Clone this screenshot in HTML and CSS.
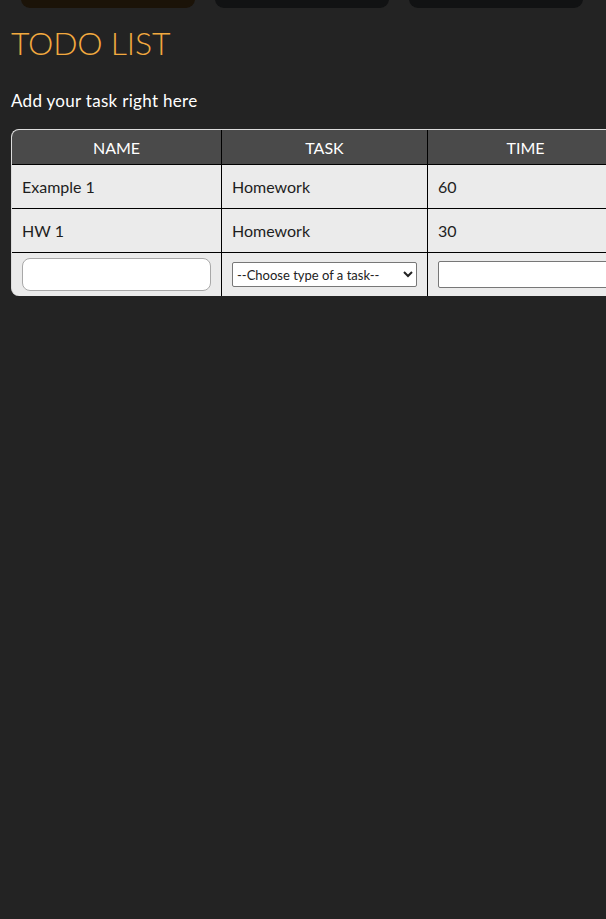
FILE: index.html
```html
<!DOCTYPE html>
<html>
<head>
<meta charset="utf-8">
<link rel="stylesheet" href="styles.css">
</head>
<body>
<nav class="nav">
  <button class="nav-btn nav-btn-active"></button>
  <button class="nav-btn"></button>
  <button class="nav-btn"></button>
</nav>
<h1 class="title">TODO LIST</h1>
<p class="lead">Add your task right here</p>
<table class="todo">
  <thead>
    <tr>
      <th class="col-name">NAME</th>
      <th class="col-task">TASK</th>
      <th class="col-time">TIME</th>
    </tr>
  </thead>
  <tbody>
    <tr><td>Example 1</td><td>Homework</td><td>60</td></tr>
    <tr><td>HW 1</td><td>Homework</td><td>30</td></tr>
    <tr class="form-row">
      <td><input class="name-input" type="text"></td>
      <td><select class="task-select"><option>--Choose type of a task--</option></select></td>
      <td><input class="time-input" type="text"></td>
    </tr>
  </tbody>
</table>
</body>
</html>
```
FILE: styles.css
```css
html { overflow: hidden; }
body {
  margin: 0;
  background: #232323;
  font-family: "Lato", "Noto Sans", sans-serif;
  color: #fff;
  width: 700px;
}
.nav {
  display: flex;
  gap: 20px;
  padding-left: 21px;
  margin-top: -32px;
}
.nav-btn {
  width: 174px;
  height: 40px;
  border: none;
  border-radius: 9px;
  background: #111213;
  padding: 0;
}
.nav-btn-active { background: #1b1308; }
.title {
  margin: 15px 0 0 11px;
  font-size: 32px;
  font-weight: 300;
  color: #f2a93f;
  line-height: 40px;
  letter-spacing: -0.2px;
}
.lead {
  margin: 26px 0 0 11px;
  font-size: 17px;
  line-height: 24px;
  letter-spacing: 0.3px;
}
.todo {
  margin: 16px 0 0 11px;
  border-collapse: separate;
  border-spacing: 0;
  border-top: 1px solid #dcdcdc;
  border-left: 1px solid #dcdcdc;
  border-radius: 8px 0 0 8px;
  background: #ebebeb;
  overflow: hidden;
  font-size: 16px;
}
.todo th {
  background: #4a4a4a;
  color: #fff;
  font-weight: 400;
  height: 35px;
  box-sizing: border-box;
  padding: 0;
  border-right: 1px solid #000;
  border-bottom: 1px solid #000;
  text-align: center;
}
.col-name { width: 210px; }
.col-task { width: 206px; }
.col-time { width: 196px; }
.todo td {
  color: #1e1e1e;
  height: 44px;
  padding: 0 10px;
  border-right: 1px solid #000;
  border-bottom: 1px solid #000;
  box-sizing: border-box;
}
.todo tbody tr:last-child td { border-bottom: none; height: 43px; }
.name-input {
  display: block;
  width: 189px;
  height: 33px;
  box-sizing: border-box;
  border: 1px solid #a8a8a8;
  border-radius: 8px;
  background: #fff;
}
.task-select {
  display: block;
  width: 185px;
  height: 25px;
  box-sizing: border-box;
  border: 1px solid #777;
  border-radius: 2px;
  background: #fff;
  font-family: "Lato", "Noto Sans", sans-serif;
  font-size: 13px;
  color: #222;
}
.time-input {
  display: block;
  width: 175px;
  height: 27px;
  box-sizing: border-box;
  border: 1px solid #777;
  border-radius: 2px;
  background: #fff;
}
```
